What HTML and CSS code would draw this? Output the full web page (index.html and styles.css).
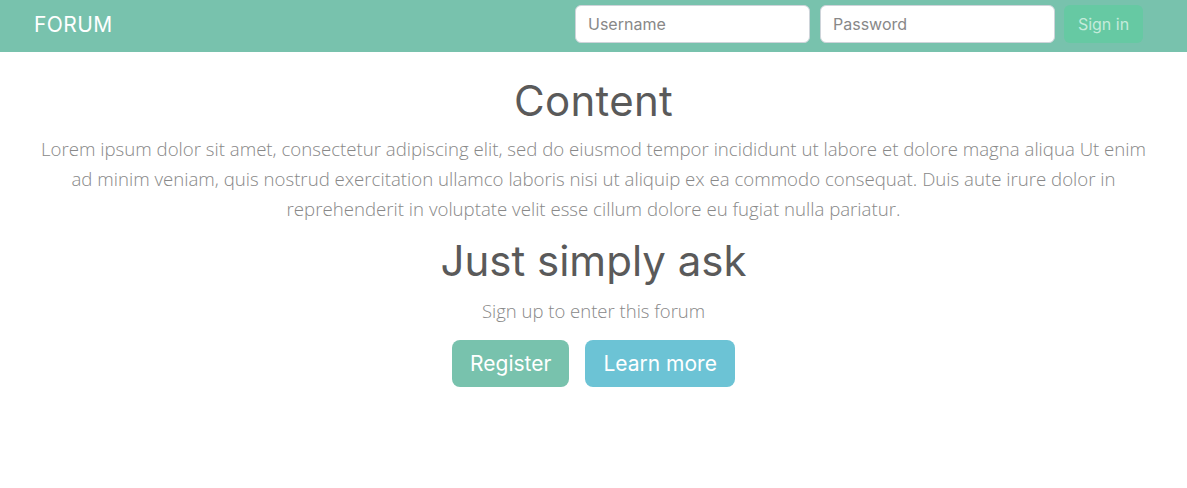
FILE: index.html
```html
<!DOCTYPE html>
<html lang="en">
<head>
<meta charset="utf-8">
<title>Forum</title>
<link rel="stylesheet" href="styles.css">
</head>
<body>
<nav class="navbar">
  <a class="brand" href="#">FORUM</a>
  <form class="login">
    <input class="field" type="text" placeholder="Username">
    <input class="field" type="password" placeholder="Password">
    <button class="btn-signin" type="button">Sign in</button>
  </form>
</nav>
<main class="main">
  <h1 class="title">Content</h1>
  <p class="lead">Lorem ipsum dolor sit amet, consectetur adipiscing elit, sed do eiusmod tempor incididunt ut labore et dolore magna aliqua Ut enim ad minim veniam, quis nostrud exercitation ullamco laboris nisi ut aliquip ex ea commodo consequat. Duis aute irure dolor in reprehenderit in voluptate velit esse cillum dolore eu fugiat nulla pariatur.</p>
  <h1 class="title title-ask">Just simply ask</h1>
  <p class="sub">Sign up to enter this forum</p>
  <div class="actions">
    <a class="btn btn-primary" href="#">Register</a>
    <a class="btn btn-info" href="#">Learn more</a>
  </div>
</main>
</body>
</html>
```

FILE: styles.css
```css
* { box-sizing: border-box; }
html, body { margin: 0; padding: 0; }
body {
  font-family: "Open Sans", "Liberation Sans", sans-serif;
  font-weight: 300;
  color: #888;
  background: #fff;
}
.navbar {
  height: 52px;
  background: #78c2ad;
  display: flex;
  align-items: center;
  justify-content: space-between;
  padding: 0 44px 4px 34px;
}
.brand {
  font-family: "Inter", "DejaVu Sans", sans-serif;
  font-weight: 400;
  font-size: 21px;
  color: #fff;
  text-decoration: none;
  letter-spacing: 0.4px;
}
.login {
  display: flex;
  align-items: center;
  gap: 10px;
}
.field {
  width: 235px;
  height: 38px;
  border: 1px solid #ced4da;
  border-radius: 6px;
  padding: 0 12px;
  font-family: "Inter", sans-serif;
  font-size: 16px;
  font-weight: 400;
  color: #5a5a5a;
  background: #fff;
  outline: none;
}
.field::placeholder { color: #888; }
.btn-signin {
  height: 38px;
  width: 79px;
  margin-left: -1px;
  padding: 0;
  border: none;
  border-radius: 6px;
  background: #66c9a3;
  color: #c4ebdb;
  font-family: "Inter", sans-serif;
  font-size: 16px;
  font-weight: 400;
}
.main {
  text-align: center;
  padding: 0 30px;
}
.title {
  margin: 24px 0 8px;
  font-family: "Inter", "DejaVu Sans", sans-serif;
  font-weight: 400;
  font-size: 42px;
  line-height: 1.2;
  color: #5a5a5a;
  letter-spacing: 0.3px;
}
.title-ask { margin-top: 0; letter-spacing: 0; }
.lead {
  margin: 0 0 12px;
  font-size: 18.65px;
  line-height: 30px;
  font-weight: 300;
}
.sub {
  margin: 10px 0 16px;
  font-size: 18.5px;
  line-height: 27px;
}
.actions {
  display: flex;
  justify-content: center;
  gap: 16px;
}
.btn {
  display: inline-block;
  height: 47px;
  line-height: 47px;
  padding: 0 18px;
  border-radius: 8px;
  color: #fff;
  text-decoration: none;
  font-family: "Inter", sans-serif;
  font-size: 21px;
  font-weight: 400;
}
.btn-primary { background: #78c2ad; }
.btn-info { background: #6cc3d5; }
```
